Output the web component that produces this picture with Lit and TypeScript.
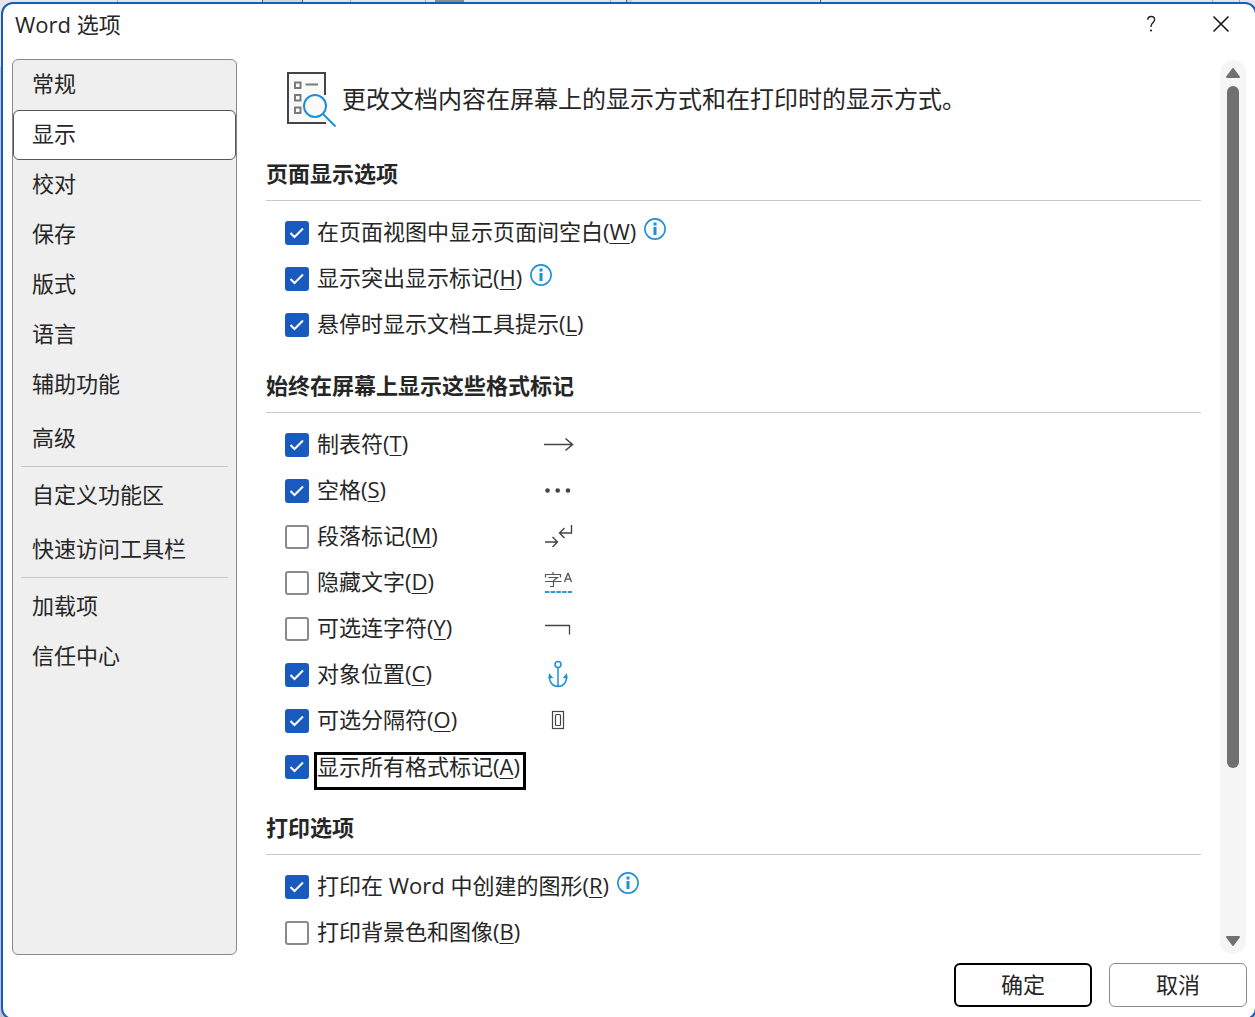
import { LitElement, html, svg, css, nothing } from "lit";
import { customElement, property, state } from "lit/decorators.js";

interface Option {
  id: string;
  text: string;
  key: string;
  checked: boolean;
  info?: boolean;
  symbol?: string;
  focused?: boolean;
}

interface Section {
  title: string;
  options: Option[];
}

const NAV: string[][] = [
  ["常规", "显示", "校对", "保存", "版式", "语言", "辅助功能", "高级"],
  ["自定义功能区", "快速访问工具栏"],
  ["加载项", "信任中心"],
];

const SECTIONS: Section[] = [
  {
    title: "页面显示选项",
    options: [
      { id: "whitespace", text: "在页面视图中显示页面间空白", key: "W", checked: true, info: true },
      { id: "highlight", text: "显示突出显示标记", key: "H", checked: true, info: true },
      { id: "tooltips", text: "悬停时显示文档工具提示", key: "L", checked: true },
    ],
  },
  {
    title: "始终在屏幕上显示这些格式标记",
    options: [
      { id: "tabs", text: "制表符", key: "T", checked: true, symbol: "tab" },
      { id: "spaces", text: "空格", key: "S", checked: true, symbol: "space" },
      { id: "paragraphs", text: "段落标记", key: "M", checked: false, symbol: "paragraph" },
      { id: "hidden-text", text: "隐藏文字", key: "D", checked: false, symbol: "hidden" },
      { id: "hyphens", text: "可选连字符", key: "Y", checked: false, symbol: "hyphen" },
      { id: "anchors", text: "对象位置", key: "C", checked: true, symbol: "anchor" },
      { id: "breaks", text: "可选分隔符", key: "O", checked: true, symbol: "break" },
      { id: "all-marks", text: "显示所有格式标记", key: "A", checked: true, focused: true },
    ],
  },
  {
    title: "打印选项",
    options: [
      { id: "drawings", text: "打印在 Word 中创建的图形", key: "R", checked: true, info: true },
      { id: "background", text: "打印背景色和图像", key: "B", checked: false },
    ],
  },
];

const SYMBOLS: Record<string, unknown> = {
  tab: svg`<path d="M2 15.5H30M23.5 9.5L30.5 15.5L23.5 21.5" stroke="#444" stroke-width="1.5"/>`,
  space: svg`<g fill="#444"><circle cx="5.500" cy="15.500" r="2.300"/><circle cx="15.700" cy="15.500" r="2.300"/><circle cx="26" cy="15.500" r="2.300"/></g>`,
  paragraph: svg`<path d="M3 21H15.500M10.500 16L15.500 21L10.500 26M29.500 4V12H17.500M22.500 7L17.500 12L22.500 17" stroke="#444" stroke-width="1.400"/>`,
  hidden: svg`<path d="M3.500 10.500V7.500H18.500V10.500M11 5V7.500M6.500 10.500H15.500L11.500 13.500M3 14.500H19.500M11.500 13.500V19.500H8" stroke="#555" stroke-width="1.200"/><path d="M22.500 15L25.800 6.500H26.200L29.500 15M23.600 12.200H28.400" stroke="#555" stroke-width="1.300"/><path d="M3 25H30" stroke="#2f97d8" stroke-width="2" stroke-dasharray="4.500 1.200"/>`,
  hyphen: svg`<path d="M3 12.500H27.500V21.500" stroke="#444" stroke-width="1.300"/>`,
  anchor: svg`<g stroke="#1f8fd6" stroke-width="1.500"><circle cx="16" cy="5.500" r="3"/><path d="M16 8.500V27M7.500 17C7 23 10.500 27.500 16 27.500C21.500 27.500 25 23 24.500 17"/></g><path d="M7 14L11.300 19L6.500 19.500ZM25 14L20.700 19L25.500 19.500Z" fill="#1f8fd6"/>`,
  break: svg`<rect x="10.500" y="6.500" width="11" height="17" stroke="#444" stroke-width="1.200"/><rect x="13.500" y="9.500" width="5" height="11" rx="1" stroke="#444" stroke-width="1.200"/>`,
};

@customElement("option-row")
class OptionRow extends LitElement {
  @property({ attribute: false }) option!: Option;

  static styles = css`
    :host { display: block; }
    .row {
      display: grid;
      grid-template-columns: 24px 217px 32px 1fr;
      column-gap: 8px;
      align-items: center;
      height: 46px;
    }
    .box { display: grid; width: 24px; height: 24px; }
    .box > * { grid-area: 1 / 1; }
    input {
      appearance: none;
      box-sizing: border-box;
      width: 24px;
      height: 24px;
      margin: 0;
      border: 2px solid #8a8a8a;
      border-radius: 3px;
      background: #fff;
      outline: none;
    }
    input:checked { background: #185abd; border-color: #185abd; }
    .tick { width: 24px; height: 24px; pointer-events: none; }
    input:not(:checked) + .tick { visibility: hidden; }
    .text { display: flex; align-items: center; gap: 8px; white-space: nowrap; }
    label { padding-bottom: 4px; line-height: 24px; }
    .key { text-decoration: underline; text-decoration-thickness: 1px; text-underline-offset: 3px; }
    .focused { align-self: start; }
    .focused label {
      margin: 8px 0 0 -3px;
      border: 3px solid #000;
      padding: 0 3px 10px 0;
      line-height: 22px;
    }
    .info { flex: none; width: 22px; height: 22px; margin-bottom: 8px; }
    .symbol { width: 32px; height: 32px; }
  `;

  render() {
    const o = this.option;
    return html`
      <div class="row">
        <span class="box">
          <input type="checkbox" id=${o.id} .checked=${o.checked} />
          <svg class="tick" viewBox="0 0 24 24" fill="none" aria-hidden="true">
            <path d="M5.500 12L9.500 16L18 7.500" stroke="#fff" stroke-width="2" />
          </svg>
        </span>
        <span class="text ${o.focused ? "focused" : ""}">
          <label for=${o.id}>${o.text}(<span class="key">${o.key}</span>)</label>
          ${o.info
            ? html`<svg class="info" viewBox="0 0 22 22" fill="none" aria-hidden="true">
                <circle cx="11" cy="11" r="10.100" fill="#fafafa" stroke="#1f8fd6" stroke-width="1.600" />
                <path d="M11 4.500V7.500M11 9V17" stroke="#1f8fd6" stroke-width="3" />
              </svg>`
            : nothing}
        </span>
        ${o.symbol
          ? html`<svg class="symbol" viewBox="0 0 32 32" fill="none" aria-hidden="true">${SYMBOLS[o.symbol]}</svg>`
          : nothing}
      </div>
    `;
  }
}

@customElement("app-root")
class AppRoot extends LitElement {
  @state() private selected = "显示";

  static styles = css`
    :host {
      display: block;
      box-sizing: border-box;
      height: 100vh;
      overflow: hidden;
      padding: 2px 0 0 1px;
      background:
        linear-gradient(90deg, transparent 117px, #aaa 117px 118px, transparent 118px 262px, #555 262px 263px, #d4d4d4 263px 302px, #555 302px 303px, transparent 303px 350px, #aaa 350px 351px, transparent 351px 425px, #aaa 425px 426px, transparent 426px 435px, #8a8a8a 435px 464px, transparent 464px 610px, #aaa 610px 611px, transparent 611px 626px, #555 626px 627px, #d0d0d0 627px 632px, transparent 632px 820px, #555 820px 821px, transparent 821px 1212px, #aaa 1212px 1213px, transparent 1213px 1239px, #aaa 1239px 1240px, transparent 1240px) 0 0 / 100% 2px no-repeat,
        linear-gradient(#e6e6e8 67px, #c4c4c4 67px);
      color: #262626;
      font-family: "Open Sans", "Noto Sans CJK SC", sans-serif;
      font-size: 22px;
      line-height: 30px;
    }
    .dialog {
      box-sizing: border-box;
      display: flex;
      flex-direction: column;
      height: calc(100% + 3px);
      margin-right: -2px;
      border: 2px solid #185abd;
      border-radius: 12px;
      background: #fff;
    }
    .titlebar {
      display: flex;
      align-items: center;
      box-sizing: border-box;
      height: 55px;
      padding: 0 16px 15px 12px;
    }
    h1 { flex: 1; margin: 0; font-size: 22px; font-weight: 400; }
    .tool {
      display: grid;
      place-items: center;
      width: 36px;
      height: 36px;
      padding: 0;
      border: 0;
      background: none;
    }
    .tools { display: flex; gap: 34px; }
    .tool svg { width: 20px; height: 20px; }
    .body { flex: 1; display: flex; min-height: 0; padding: 0 9px; }
    nav {
      box-sizing: border-box;
      flex: none;
      width: 225px;
      border: 1px solid #8a8a8a;
      border-radius: 6px;
      background: #efefef;
    }
    ul { list-style: none; margin: 0; padding: 0; }
    .rule { height: 1px; margin: 2px 8px 4px; border: 0; background: #c8c8c8; }
    .nav-item {
      display: block;
      box-sizing: border-box;
      width: 100%;
      height: 50px;
      padding: 0 18px 4px;
      border: 1px solid transparent;
      border-radius: 6px;
      background: none;
      color: inherit;
      font: inherit;
      text-align: left;
    }
    .nav-item.selected { border-color: #555; background: #fff; }
    .spaced { margin-top: 4px; }
    .content { flex: 1; min-width: 0; overflow: hidden; padding: 0 19px 0 29px; }
    .intro { display: flex; align-items: center; gap: 2px; height: 80px; padding-left: 18px; font-size: 24px; }
    .intro svg { flex: none; width: 56px; height: 60px; }
    .intro p { margin: 0; }
    h2 {
      box-sizing: border-box;
      height: 46px;
      margin: 0 0 9px;
      padding-top: 3px;
      border-bottom: 1px solid #c8c8c8;
      font-size: 22px;
      font-weight: 700;
    }
    section { padding-bottom: 19px; }
    .intro + section { padding-top: 16px; }
    .options { padding-left: 19px; }
    .scrollbar {
      display: flex;
      flex-direction: column;
      align-items: center;
      box-sizing: border-box;
      width: 26px;
      margin: 1px 0;
      padding: 8px 0;
      border-radius: 13px;
      background: #f5f5f5;
    }
    .scrollbar svg { flex: none; width: 14px; height: 10px; }
    .track { flex: 1; width: 12px; margin: 8px 0; }
    .thumb { height: 81%; border-radius: 6px; background: #707070; }
    footer { display: flex; justify-content: flex-end; gap: 17px; padding: 8px 8px 11px; }
    .action {
      box-sizing: border-box;
      width: 138px;
      height: 44px;
      padding: 0 0 2px;
      border: 1px solid #8a8a8a;
      border-radius: 6px;
      background: #fff;
      color: inherit;
      font: inherit;
    }
    .action.primary { border: 2px solid #000; }
  `;

  private navItem(name: string, spaced: boolean) {
    const active = name === this.selected;
    return html`<li>
      <button
        class="nav-item ${active ? "selected" : ""} ${spaced ? "spaced" : ""}"
        aria-current=${active ? "page" : "false"}
        @click=${() => (this.selected = name)}
      >${name}</button>
    </li>`;
  }

  render() {
    return html`
      <div class="dialog" role="dialog" aria-labelledby="title" lang="zh-CN">
        <header class="titlebar">
          <h1 id="title">Word 选项</h1>
          <div class="tools">
            <button class="tool" aria-label="帮助">
              <svg viewBox="0 0 20 20" fill="none">
                <path d="M6.800 5.800C6.800 3.600 8.200 2.500 10.200 2.500C12.300 2.500 13.600 3.700 13.600 5.600C13.600 8.600 10 8.800 10 12.200V13" stroke="#222" stroke-width="1.400" />
                <circle cx="10" cy="16.500" r="1.100" fill="#222" />
              </svg>
            </button>
            <button class="tool" aria-label="关闭">
              <svg viewBox="0 0 20 20" fill="none">
                <path d="M2.500 2.500L17.500 17.500M17.500 2.500L2.500 17.500" stroke="#111" stroke-width="1.500" />
              </svg>
            </button>
          </div>
        </header>
        <div class="body">
          <nav>
            ${NAV.map(
              (group, g) => html`
                ${g ? html`<hr class="rule" />` : nothing}
                <ul>${group.map((n) => this.navItem(n, n === "高级" || n === "快速访问工具栏"))}</ul>
              `
            )}
          </nav>
          <main class="content">
            <div class="intro">
              <svg viewBox="0 0 56 60" fill="none" aria-hidden="true">
                <path d="M41 24V4H4V54H41" fill="#fafafa" />
                <path d="M41 26V4H4V54H42" stroke="#444" stroke-width="2" />
                <g stroke="#7a7a7a" stroke-width="2">
                  <rect x="11" y="13.500" width="5.500" height="5.500" />
                  <rect x="11" y="26" width="5.500" height="5.500" />
                  <rect x="11" y="38.500" width="5.500" height="5.500" />
                  <path d="M21.500 15.500H34" />
                </g>
                <circle cx="31" cy="37" r="11" fill="#fafafa" stroke="#1f8fd6" stroke-width="2" />
                <path d="M39 45L51.500 57.500" stroke="#1f8fd6" stroke-width="2" />
              </svg>
              <p>更改文档内容在屏幕上的显示方式和在打印时的显示方式。</p>
            </div>
            ${SECTIONS.map(
              (s) => html`
                <section>
                  <h2>${s.title}</h2>
                  <div class="options">
                    ${s.options.map((o) => html`<option-row .option=${o}></option-row>`)}
                  </div>
                </section>
              `
            )}
          </main>
          <div class="scrollbar" aria-hidden="true">
            <svg viewBox="0 0 14 10"><path d="M7 1L13 9H1Z" fill="#707070" stroke="#707070" stroke-width="2" stroke-linejoin="round" /></svg>
            <div class="track"><div class="thumb"></div></div>
            <svg viewBox="0 0 14 10"><path d="M7 9L13 1H1Z" fill="#707070" stroke="#707070" stroke-width="2" stroke-linejoin="round" /></svg>
          </div>
        </div>
        <footer>
          <button class="action primary">确定</button>
          <button class="action">取消</button>
        </footer>
      </div>
    `;
  }
}
